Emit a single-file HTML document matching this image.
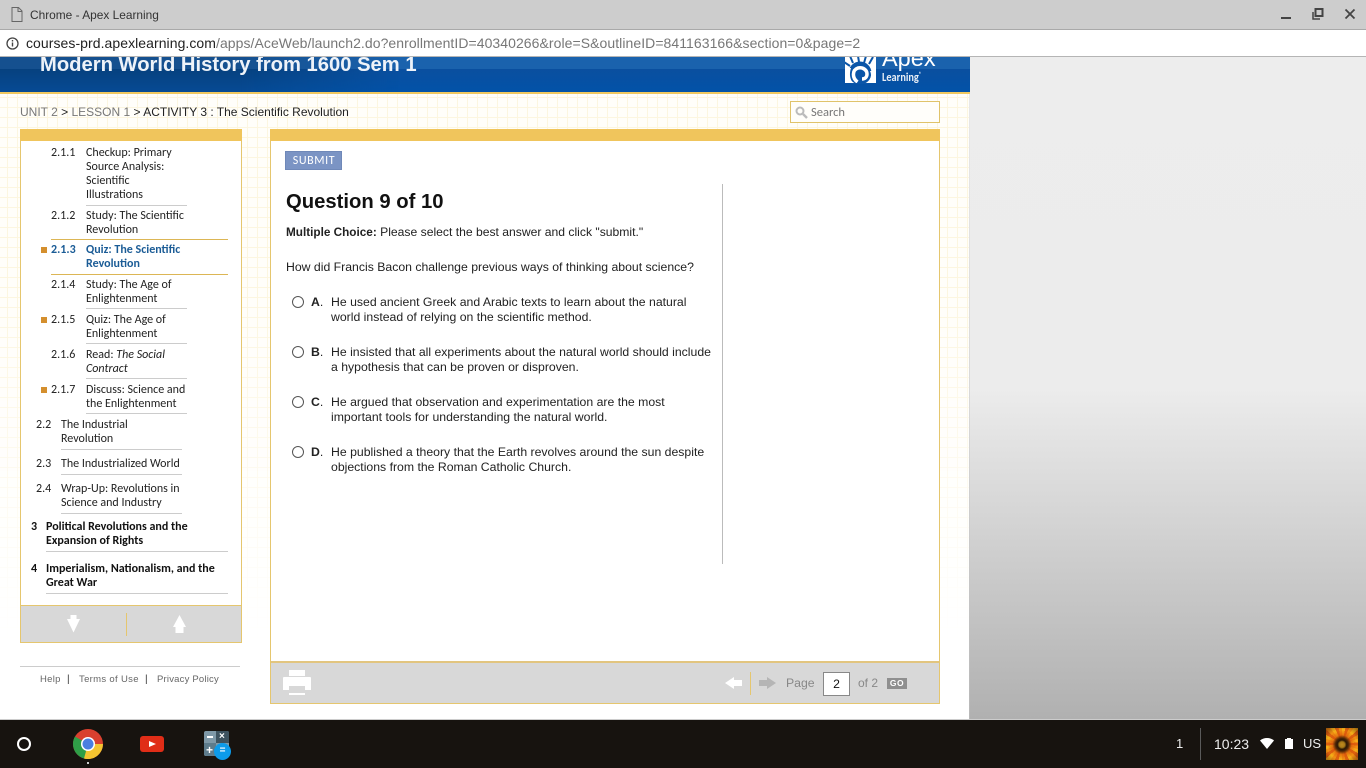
<!DOCTYPE html>
<html>
<head>
<meta charset="utf-8">
<style>
html,body{margin:0;padding:0;width:1366px;height:768px;overflow:hidden;background:#fff;font-family:"Liberation Sans",sans-serif}
.a{position:absolute;white-space:nowrap}
.side{font-family:"Carlito","Liberation Sans",sans-serif;font-size:12px;line-height:14px;color:#222}
.q{font-size:12.25px;line-height:15px;color:#222}
.rad{position:absolute;left:292px;width:10px;height:10px;border:1px solid #555;border-radius:50%;background:#fff}
.ln{position:absolute;height:1px;background:#ccc}
.sq{position:absolute;left:41px;width:6px;height:6px;background:#d48f2e}
</style>
</head>
<body>
<!-- right gray -->
<div class="a" style="left:970px;top:57px;width:396px;height:663px;background:linear-gradient(#ededed,#ececec 50%,#b0b0b0 100%)"></div>
<div class="a" style="left:969px;top:94px;width:1px;height:626px;background:linear-gradient(#e8e8e8,#d8d8d8 50%,#b8b8b8)"></div>
<!-- grid -->
<div class="a" style="left:0;top:94px;width:969px;height:626px;background:#fff"></div>
<div class="a" style="left:0;top:94px;width:969px;height:580px;background-color:#fffefa;background-image:linear-gradient(#fcf6e0 1px,transparent 1px),linear-gradient(90deg,#fcf6e0 1px,transparent 1px);background-size:10px 10px;background-position:7px 3px;-webkit-mask-image:linear-gradient(#000 35%,transparent 95%)"></div>
<!-- header -->
<div class="a" style="left:0;top:57px;width:970px;height:37px;background:linear-gradient(#1a62ad 0,#1a62ad 12px,#0a4f9f 12px,#0252a8);border-bottom:2px solid #f0c860;box-sizing:border-box"></div>
<div class="a" style="left:0;top:57px;width:400px;height:35px;background:linear-gradient(#15508f 0,#15508f 12px,#06417f 12px,#064a94);-webkit-mask-image:linear-gradient(90deg,#000 60%,transparent)"></div>
<div class="a" style="left:40px;top:53px;font-size:20.200px;line-height:24px;font-weight:bold;color:#eef3f9">Modern World History from 1600 Sem 1</div>
<div class="a" style="left:845px;top:57px;width:125px;height:35px;overflow:hidden">
 <svg width="31" height="27" viewBox="0 0 31 27" style="position:absolute;left:0;top:0">
  <path d="M0 0h31v26H0z" fill="#fff"/>
  <path d="M5 -1l3 7M13 -1l1 6M21 -1l-2 7M28 0l-4 7M-1 5l6 4" stroke="#0a55a8" stroke-width="2" fill="none"/>
  <circle cx="15" cy="16" r="11.500" fill="#0a55a8"/>
  <path d="M22 26h9V14h-6c2 4 1 8-3 12zM0 11h6c-2 6-1 11 2 15H0z" fill="#fff"/>
  <path d="M12.500 25C7 21 7 13 13 11c5-1 9 2 9 6 0 3-2 5-5 5" fill="none" stroke="#fff" stroke-width="3.500"/>
  <path d="M6 26h17v1H6z" fill="#0a55a8"/>
 </svg>
 <div class="a" style="left:37px;top:-13px;font-size:23.500px;line-height:28px;color:#fff;font-family:'Liberation Sans',sans-serif">Apex</div>
 <div class="a" style="left:37px;top:14px;font-size:12px;line-height:14px;font-weight:bold;color:#e8eef6;font-family:'Carlito','Liberation Sans',sans-serif;transform:scaleX(.86);transform-origin:0 0">Learning<sup style="font-size:6px;line-height:0">®</sup></div>
</div>
<!-- breadcrumb -->
<div class="a" style="left:20px;top:105px;font-size:12px;line-height:15px;color:#222"><span style="color:#777">UNIT 2</span> &gt; <span style="color:#777">LESSON 1</span> &gt; ACTIVITY 3 : The Scientific Revolution</div>
<!-- search -->
<div class="a" style="left:790px;top:101px;width:150px;height:22px;box-sizing:border-box;border:1px solid #e0c36a;background:#fffefa"></div>
<svg class="a" style="left:795px;top:106px" width="13" height="13" viewBox="0 0 13 13"><circle cx="5" cy="5" r="3.500" fill="none" stroke="#bbb" stroke-width="2"/><path d="M8 8l4 4" stroke="#bbb" stroke-width="2.400"/></svg>
<div class="a" style="left:811px;top:106px;font-size:12.500px;line-height:14px;color:#777;font-family:'Carlito','Liberation Sans',sans-serif">Search</div>

<!-- sidebar -->
<div class="a" style="left:20px;top:129px;width:222px;height:514px;box-sizing:border-box;border:1px solid #e5c66e;border-top:0;background:#fff"></div>
<div class="a" style="left:20px;top:129px;width:222px;height:12px;background:#f0c55c"></div>
<div class="a" style="left:21px;top:605px;width:220px;height:37px;background:#d8d8d8;border-top:1px solid #e5c66e;box-sizing:border-box"></div>
<div class="a" style="left:126px;top:613px;width:1px;height:23px;background:#e5c66e"></div>
<svg class="a" style="left:67px;top:615px" width="13" height="18" viewBox="0 0 13 18"><path d="M3.500 0h6v4h3.500L6.500 17.500 0 4h3.500z" fill="#fff"/></svg>
<svg class="a" style="left:173px;top:615px" width="13" height="18" viewBox="0 0 13 18"><path d="M6.500 0L13 12H10.500v6h-8v-6H0z" fill="#fff"/></svg>

<div class="side">
<div class="a" style="left:51px;top:146px">2.1.1</div>
<div class="a" style="left:86px;top:146px">Checkup: Primary<br>Source Analysis:<br>Scientific<br>Illustrations</div>
<div class="ln" style="left:86px;top:205px;width:101px"></div>
<div class="a" style="left:51px;top:209px">2.1.2</div>
<div class="a" style="left:86px;top:209px">Study: The Scientific<br>Revolution</div>
<div class="ln" style="left:51px;top:239px;width:177px;background:#dcb655"></div>
<div class="sq" style="top:247px"></div>
<div class="a" style="left:51px;top:243px;color:#1b5c96;font-weight:bold">2.1.3</div>
<div class="a" style="left:86px;top:243px;color:#1b5c96;font-weight:bold">Quiz: The Scientific<br>Revolution</div>
<div class="ln" style="left:51px;top:274px;width:177px;background:#dcb655"></div>
<div class="a" style="left:51px;top:278px">2.1.4</div>
<div class="a" style="left:86px;top:278px">Study: The Age of<br>Enlightenment</div>
<div class="ln" style="left:86px;top:308px;width:101px"></div>
<div class="sq" style="top:317px"></div>
<div class="a" style="left:51px;top:313px">2.1.5</div>
<div class="a" style="left:86px;top:313px">Quiz: The Age of<br>Enlightenment</div>
<div class="ln" style="left:86px;top:343px;width:101px"></div>
<div class="a" style="left:51px;top:348px">2.1.6</div>
<div class="a" style="left:86px;top:348px">Read: <i>The Social<br>Contract</i></div>
<div class="ln" style="left:86px;top:378px;width:101px"></div>
<div class="sq" style="top:387px"></div>
<div class="a" style="left:51px;top:383px">2.1.7</div>
<div class="a" style="left:86px;top:383px">Discuss: Science and<br>the Enlightenment</div>
<div class="ln" style="left:86px;top:413px;width:101px"></div>
<div class="a" style="left:36px;top:418px">2.2</div>
<div class="a" style="left:61px;top:418px">The Industrial<br>Revolution</div>
<div class="ln" style="left:61px;top:449px;width:121px"></div>
<div class="a" style="left:36px;top:457px">2.3</div>
<div class="a" style="left:61px;top:457px">The Industrialized World</div>
<div class="ln" style="left:61px;top:474px;width:121px"></div>
<div class="a" style="left:36px;top:482px">2.4</div>
<div class="a" style="left:61px;top:482px">Wrap-Up: Revolutions in<br>Science and Industry</div>
<div class="ln" style="left:61px;top:513px;width:121px"></div>
<div class="a" style="left:31px;top:520px;font-weight:bold;color:#111">3</div>
<div class="a" style="left:46px;top:520px;font-weight:bold;color:#111">Political Revolutions and the<br>Expansion of Rights</div>
<div class="ln" style="left:46px;top:551px;width:182px"></div>
<div class="a" style="left:31px;top:562px;font-weight:bold;color:#111">4</div>
<div class="a" style="left:46px;top:562px;font-weight:bold;color:#111">Imperialism, Nationalism, and the<br>Great War</div>
<div class="ln" style="left:46px;top:593px;width:182px"></div>
</div>

<!-- footer links -->
<div class="ln" style="left:20px;top:666px;width:220px"></div>
<div class="a" style="left:40px;top:673px;font-size:9.500px;line-height:13px;color:#666;letter-spacing:.28px">Help</div>
<div class="a" style="left:67px;top:673px;font-size:10px;line-height:13px;color:#333">|</div>
<div class="a" style="left:79px;top:673px;font-size:9.500px;line-height:13px;color:#666;letter-spacing:.32px">Terms of Use</div>
<div class="a" style="left:145px;top:673px;font-size:10px;line-height:13px;color:#333">|</div>
<div class="a" style="left:157px;top:673px;font-size:9.500px;line-height:13px;color:#666;letter-spacing:.2px">Privacy Policy</div>

<!-- main panel -->
<div class="a" style="left:270px;top:129px;width:670px;height:575px;box-sizing:border-box;border:1px solid #e5c66e;border-top:0;background:#fff"></div>
<div class="a" style="left:270px;top:129px;width:670px;height:12px;background:#f0c55c"></div>
<div class="a" style="left:271px;top:661px;width:668px;height:42px;background:#d8d8d8;border-top:2px solid #e2c57f;box-sizing:border-box"></div>
<div class="a" style="left:285px;top:151px;width:57px;height:19px;box-sizing:border-box;background:#7b94c4;border:1px solid #6f88b8;color:#fff;font-family:'Carlito','Liberation Sans',sans-serif;font-size:12px;line-height:18px;text-align:center;letter-spacing:.6px;padding-left:1px">SUBMIT</div>
<div class="a" style="left:286px;top:190px;font-size:20.250px;line-height:24px;font-weight:bold;color:#111">Question 9 of 10</div>
<div class="a q" style="left:286px;top:225px;font-size:12.150px"><b style="font-size:11.750px">Multiple Choice:</b> Please select the best answer and click "submit."</div>
<div class="a q" style="left:286px;top:260px">How did Francis Bacon challenge previous ways of thinking about science?</div>
<div class="a" style="left:722px;top:184px;width:1px;height:380px;background:#bbb"></div>

<div class="rad" style="top:296px"></div>
<div class="a q" style="left:311px;top:295px"><b>A</b>.</div>
<div class="a q" style="left:331px;top:295px">He used ancient Greek and Arabic texts to learn about the natural<br>world instead of relying on the scientific method.</div>
<div class="rad" style="top:346px"></div>
<div class="a q" style="left:311px;top:345px"><b>B</b>.</div>
<div class="a q" style="left:331px;top:345px">He insisted that all experiments about the natural world should include<br>a hypothesis that can be proven or disproven.</div>
<div class="rad" style="top:396px"></div>
<div class="a q" style="left:311px;top:395px"><b>C</b>.</div>
<div class="a q" style="left:331px;top:395px">He argued that observation and experimentation are the most<br>important tools for understanding the natural world.</div>
<div class="rad" style="top:446px"></div>
<div class="a q" style="left:311px;top:445px"><b>D</b>.</div>
<div class="a q" style="left:331px;top:445px">He published a theory that the Earth revolves around the sun despite<br>objections from the Roman Catholic Church.</div>

<!-- bottom bar -->
<svg class="a" style="left:283px;top:670px" width="28" height="25" viewBox="0 0 28 25"><path d="M6 0h16v6H6z" fill="#fff"/><path d="M1 7h26a1 1 0 0 1 1 1v12H22v-4H6v4H0V8a1 1 0 0 1 1-1z" fill="#fff"/><path d="M6 23h16v2H6z" fill="#fff"/></svg>
<svg class="a" style="left:724px;top:677px" width="18" height="12" viewBox="0 0 18 12"><path d="M1 6L10 0v3h8v6h-8v3z" fill="#fff"/></svg>
<div class="a" style="left:750px;top:672px;width:1px;height:23px;background:#e5c66e"></div>
<svg class="a" style="left:759px;top:677px" width="17" height="12" viewBox="0 0 17 12"><path d="M17 6L8 0v3H0v6h8v3z" fill="#b5b5b5"/></svg>
<div class="a" style="left:786px;top:676px;font-size:12.250px;line-height:15px;color:#888">Page</div>
<div class="a" style="left:823px;top:672px;width:27px;height:24px;box-sizing:border-box;border:1px solid #888;background:#fff;font-size:12.250px;line-height:22px;text-align:center;color:#111">2</div>
<div class="a" style="left:858px;top:676px;font-size:12px;line-height:15px;color:#888">of 2</div>
<div class="a" style="left:887px;top:678px;width:20px;height:11px;background:#8f8f8f;color:#fff;font-size:8.500px;line-height:11px;font-weight:bold;text-align:center;letter-spacing:.5px">GO</div>

<!-- chrome top -->
<div class="a" style="left:0;top:0;width:1366px;height:30px;background:#cdcdcd;border-bottom:1px solid #a9a9a9;box-sizing:border-box"></div>
<svg class="a" style="left:11px;top:7px" width="12" height="15" viewBox="0 0 12 15"><path d="M1 .5h6.500L11 4v10.500H1zM7 .5V4.500h4" fill="none" stroke="#666" stroke-width="1"/></svg>
<div class="a" style="left:30px;top:8px;font-size:11.900px;line-height:15px;color:#333">Chrome - Apex Learning</div>
<div class="a" style="left:1281px;top:17px;width:10px;height:2px;background:#444"></div>
<svg class="a" style="left:1312px;top:8px" width="12" height="12" viewBox="0 0 12 12"><path d="M3.500 1h7v7h-7z" fill="none" stroke="#444" stroke-width="2"/><path d="M1 4v7h7" fill="none" stroke="#444" stroke-width="1.500"/></svg>
<svg class="a" style="left:1344px;top:8px" width="12" height="12" viewBox="0 0 12 12"><path d="M1.500 1.500l9 9M10.500 1.500l-9 9" stroke="#444" stroke-width="1.800"/></svg>
<div class="a" style="left:0;top:30px;width:1366px;height:27px;background:#fff;border-bottom:1px solid #b5b5b5;box-sizing:border-box"></div>
<svg class="a" style="left:6px;top:37px" width="13" height="13" viewBox="0 0 13 13"><circle cx="6.500" cy="6.500" r="5.500" fill="none" stroke="#444" stroke-width="1.300"/><path d="M6.500 5.500v4M6.500 3v1.500" stroke="#444" stroke-width="1.400"/></svg>
<div class="a" style="left:26px;top:35px;font-size:14px;line-height:17px;color:#222;letter-spacing:.06px">courses-prd.apexlearning.com<span style="color:#777">/apps/AceWeb/launch2.do?enrollmentID=40340266&amp;role=S&amp;outlineID=841163166&amp;section=0&amp;page=2</span></div>

<!-- taskbar -->
<div class="a" style="left:0;top:719px;width:1366px;height:1px;background:#ccc"></div>
<div class="a" style="left:0;top:720px;width:1366px;height:48px;background:#17130f"></div>
<div class="a" style="left:17px;top:737px;width:14px;height:14px;box-sizing:border-box;border:2px solid #fff;border-radius:50%"></div>
<svg class="a" style="left:73px;top:729px" width="30" height="30" viewBox="0 0 30 30"><circle cx="15" cy="15" r="15" fill="#d9402f"/><path d="M15 15L2 7.500A15 15 0 0 0 15 30z" fill="#2f9e47"/><path d="M15 15h15A15 15 0 0 1 11 29.500z" fill="#f4c430"/><circle cx="15" cy="15" r="7" fill="#fff"/><circle cx="15" cy="15" r="5.500" fill="#4a7fe0"/></svg>
<div class="a" style="left:87px;top:762px;width:2px;height:2px;background:#ccc"></div>
<div class="a" style="left:140px;top:736px;width:24px;height:16px;background:#e02d17;border-radius:3px"></div>
<svg class="a" style="left:149px;top:741px" width="7" height="6" viewBox="0 0 7 6"><path d="M0 0l7 3-7 3z" fill="#fff"/></svg>
<div class="a" style="left:204px;top:731px;width:25px;height:25px;border-radius:2px;overflow:hidden;background:#7f99a8">
 <div class="a" style="left:12px;top:0;width:13px;height:12px;background:#3e535f"></div>
 <div class="a" style="left:0;top:12px;width:12px;height:13px;background:#5e7c8c"></div>
 <div class="a" style="left:3px;top:5px;width:6px;height:2px;background:#fff"></div>
 <div class="a" style="left:15px;top:0;font-size:10px;line-height:12px;color:#fff;font-weight:bold">×</div>
 <div class="a" style="left:2px;top:13px;font-size:12px;line-height:12px;color:#fff;font-weight:bold">+</div>
</div>
<div class="a" style="left:214px;top:743px;width:17px;height:17px;border-radius:50%;background:#0c9bea;color:#fff;font-size:10px;line-height:16px;text-align:center;font-weight:bold">=</div>
<div class="a" style="left:1176px;top:736px;font-size:13px;line-height:16px;color:#eee">1</div>
<div class="a" style="left:1200px;top:728px;width:1px;height:32px;background:#5a5a5a"></div>
<div class="a" style="left:1214px;top:736px;font-size:14px;line-height:16px;color:#eee">10:23</div>
<svg class="a" style="left:1260px;top:738px" width="14" height="12" viewBox="0 0 14 12"><path d="M0 2.500C4 -.8 10 -.8 14 2.500L7 11z" fill="#fff"/></svg>
<div class="a" style="left:1285px;top:739px;width:8px;height:10px;background:#fff"></div>
<div class="a" style="left:1287px;top:738px;width:4px;height:1px;background:#fff"></div>
<div class="a" style="left:1303px;top:736px;font-size:13px;line-height:16px;color:#eee">US</div>
<div class="a" style="left:1326px;top:728px;width:32px;height:32px;background:repeating-conic-gradient(#f7b21a 0 12deg,#d8500e 12deg 24deg,#ef8a12 24deg 36deg)"></div>
<div class="a" style="left:1326px;top:728px;width:32px;height:32px;background:radial-gradient(circle at 50% 52%,#c08a20 0,#a87a18 12%,#2a1705 20%,#4a2506 28%,rgba(220,90,10,.7) 42%,rgba(245,170,20,.2) 65%,rgba(60,25,5,.55) 100%)"></div>
</body>
</html>
